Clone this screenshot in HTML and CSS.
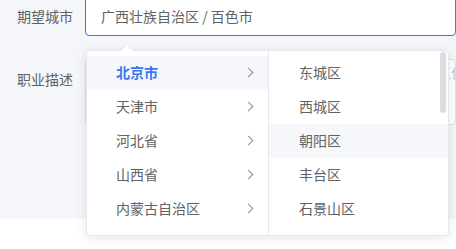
FILE: index.html
```html
<!DOCTYPE html>
<html lang="zh-CN">
<head>
  <meta charset="UTF-8">
  <title>期望城市</title>
  <link rel="stylesheet" href="styles.css">
</head>
<body>
  <div class="page">
    <div class="panel">
      <div class="form-row first">
        <label class="form-label">期望城市</label>
        <div class="cascader-input">广西壮族自治区 / 百色市</div>
      </div>
      <div class="form-row">
        <label class="form-label">职业描述</label>
        <div class="textarea">请输入职业描述，例如：负责城市规划与项目管理相关工作的工程师岗位补充</div>
      </div>
    </div>

    <div class="cascader-popup">
      <span class="popup-arrow"></span>
      <ul class="menu menu-left">
        <li class="menu-item active">北京市<span class="chev"></span></li>
        <li class="menu-item">天津市<span class="chev"></span></li>
        <li class="menu-item">河北省<span class="chev"></span></li>
        <li class="menu-item">山西省<span class="chev"></span></li>
        <li class="menu-item">内蒙古自治区<span class="chev"></span></li>
      </ul>
      <ul class="menu menu-right">
        <li class="menu-item">东城区</li>
        <li class="menu-item">西城区</li>
        <li class="menu-item hover">朝阳区</li>
        <li class="menu-item">丰台区</li>
        <li class="menu-item">石景山区</li>
        <span class="scrollbar"></span>
      </ul>
    </div>
  </div>
</body>
</html>
```

FILE: styles.css
```css
body {
  margin: 0;
  background-color: #fff;
  font-family: "Noto Sans CJK SC", "Noto Sans", sans-serif;
  font-size: 14px;
  color: #606266;
}

.page {
  position: relative;
  height: 249px;
  overflow: hidden;
}

.panel {
  height: 219px;
  background-color: #f5f6fa;
  overflow: hidden;
}

.form-row {
  display: flex;
  align-items: flex-start;
  margin-top: 23px;
}

.form-row.first {
  margin-top: -4px;
}

.form-label {
  width: 73px;
  padding-right: 12px;
  text-align: right;
  line-height: 40px;
  color: #606266;
}

.cascader-input {
  flex: 1;
  height: 38px;
  line-height: 38px;
  padding-left: 15px;
  background-color: #fff;
  border: 1px solid #3a76f0;
  border-radius: 4px;
  white-space: nowrap;
}

.textarea {
  flex: 1;
  height: 62px;
  padding: 2px 0 0 15px;
  line-height: 20px;
  background-color: #fff;
  border: 1px solid #dcdfe6;
  border-radius: 4px;
  color: #c0c4cc;
  white-space: nowrap;
  overflow: hidden;
}

.cascader-popup {
  position: absolute;
  z-index: 10;
  left: 86px;
  top: 50px;
  width: 361px;
  height: 184px;
  display: flex;
  background-color: #fff;
  border: 1px solid #e4e7ed;
  border-radius: 4px;
  box-shadow: 0 2px 12px rgba(0, 0, 0, 0.1);
}

.popup-arrow {
  position: absolute;
  left: 34px;
  top: -6px;
  width: 0;
  height: 0;
  border-left: 6px solid transparent;
  border-right: 6px solid transparent;
  border-bottom: 6px solid #fff;
  filter: drop-shadow(0 -1px 0 #e4e7ed);
}

.menu {
  list-style: none;
  margin: 0;
  padding: 5px 0 6px;
  position: relative;
}

.menu-left {
  width: 181px;
  border-right: 1px solid #e4e7ed;
}

.menu-right {
  flex: 1;
}

.menu-item {
  box-sizing: border-box;
  display: flex;
  align-items: center;
  height: 34px;
  padding: 0 14px 2px 29px;
  color: #606266;
}

.menu-right .menu-item {
  padding-left: 30px;
}

.menu-item.active {
  color: #3a76f0;
  font-weight: bold;
  background-color: #f5f7fa;
}

.menu-item.hover {
  background-color: #f5f7fa;
}

.chev {
  margin-left: auto;
  width: 6px;
  height: 6px;
  border-right: 1px solid #8a8f99;
  border-top: 1px solid #8a8f99;
  transform: rotate(45deg);
  margin-right: 2px;
}

.scrollbar {
  position: absolute;
  right: 2px;
  top: 1px;
  width: 6px;
  height: 61px;
  border-radius: 3px;
  background-color: #dcdde0;
}
```
